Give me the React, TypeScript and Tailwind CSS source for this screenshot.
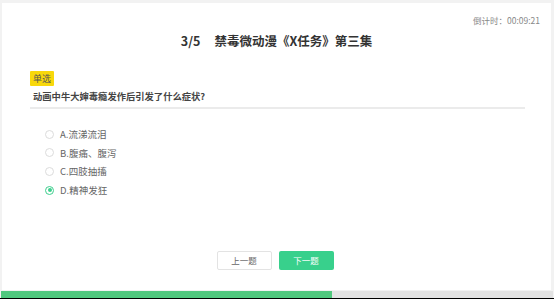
import React, { useState } from 'react';

const options = [
  { key: 'A', label: '流涕流泪' },
  { key: 'B', label: '腹痛、腹泻' },
  { key: 'C', label: '四肢抽搐' },
  { key: 'D', label: '精神发狂' },
];

const font = { fontFamily: '"Noto Sans CJK SC", "Noto Sans", sans-serif' };

export default function App() {
  const [selected, setSelected] = useState('D');
  const current = 3;
  const total = 5;

  return (
    <div className="w-[554px] h-[299px] bg-[#f2f2f2] flex flex-col overflow-hidden" style={font}>
      {/* card */}
      <div className="mt-[3px] ml-[2px] mr-[3px] h-[287px] bg-white flex flex-col">
        <div className="flex justify-end pr-[11px] pt-[11px] h-[30px]">
          <span className="text-[8.5px] leading-[12px] text-[#888]">倒计时：00:09:21</span>
        </div>
        <h1 className="text-center text-[12.5px] leading-[16px] font-bold text-[#333]">
          {current}/{total}<span className="inline-block w-[14px]" />禁毒微动漫《X任务》第三集
        </h1>

        <div className="mx-[28px] mt-[14px]">
          <span className="inline-block bg-[#f8d80b] text-[#555] text-[9px] leading-[15px] px-[3px] rounded-[1px]">
            单选
          </span>
          <p className="mt-[2px] pl-[3px] text-[9.3px] leading-[14px] font-bold text-[#444]">
            动画中牛大婶毒瘾发作后引发了什么症状?
          </p>
          <div className="mt-[4px] h-[2px] w-[495px] bg-[#ebebeb]" />
        </div>

        <ul className="ml-[43px] mt-[20px] flex flex-col gap-[8.7px]">
          {options.map((o) => {
            const on = o.key === selected;
            return (
              <li
                key={o.key}
                className="flex items-center gap-[6px] h-[10px] cursor-pointer"
                onClick={() => setSelected(o.key)}
              >
                <span
                  className={`w-[9px] h-[9px] rounded-full border flex items-center justify-center ${
                    on ? 'border-[#3ecf8e]' : 'border-[#dcdcdc]'
                  }`}
                >
                  {on && <span className="w-[4px] h-[4px] rounded-full bg-[#3ecf8e]" />}
                </span>
                <span className="text-[9.5px] leading-[12px] text-[#666]">
                  {o.key}.{o.label}
                </span>
              </li>
            );
          })}
        </ul>

        <div className="mt-auto mb-[20px] flex justify-center gap-[7px] pr-[3px]">
          <button className="w-[55px] h-[19px] border border-[#e3e3e3] bg-white rounded-[2px] text-[8.5px] text-[#666]">
            上一题
          </button>
          <button className="w-[55px] h-[19px] bg-[#38d08c] rounded-[2px] text-[8.5px] text-white">
            下一题
          </button>
        </div>
      </div>

      {/* progress */}
      <div className="mt-[1px] ml-[1px] mr-[1px] h-[7px] bg-[#e3e3e3]">
        <div className="h-full bg-[#50c87e]" style={{ width: `${(current / total) * 100}%` }} />
      </div>
      <div className="h-[1px] bg-black" />
    </div>
  );
}
